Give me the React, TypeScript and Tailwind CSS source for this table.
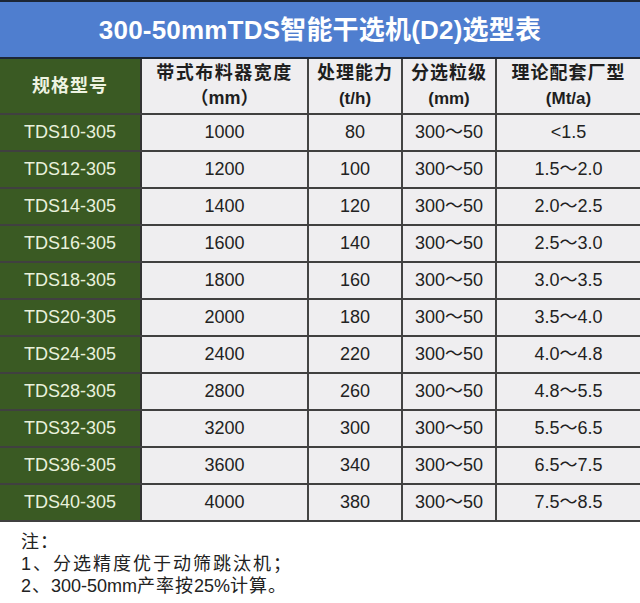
import React from "react";

const rows: [string, string, string, string, string][] = [
  ["TDS10-305", "1000", "80", "300～50", "<1.5"],
  ["TDS12-305", "1200", "100", "300～50", "1.5～2.0"],
  ["TDS14-305", "1400", "120", "300～50", "2.0～2.5"],
  ["TDS16-305", "1600", "140", "300～50", "2.5～3.0"],
  ["TDS18-305", "1800", "160", "300～50", "3.0～3.5"],
  ["TDS20-305", "2000", "180", "300～50", "3.5～4.0"],
  ["TDS24-305", "2400", "220", "300～50", "4.0～4.8"],
  ["TDS28-305", "2800", "260", "300～50", "4.8～5.5"],
  ["TDS32-305", "3200", "300", "300～50", "5.5～6.5"],
  ["TDS36-305", "3600", "340", "300～50", "6.5～7.5"],
  ["TDS40-305", "4000", "380", "300～50", "7.5～8.5"],
];

const font = "[font-family:'Liberation_Sans','Noto_Sans_CJK_SC',sans-serif]";

export default function App() {
  return (
    <div className={`w-[640px] h-[603px] bg-white ${font}`}>
      <div className="h-[59px] border-t-2 border-b-2 border-[#1c2636] bg-[#4f7ecf] flex items-center justify-center">
        <span className="text-[26px] font-bold text-white leading-none tracking-[0.2px]">300-50mmTDS智能干选机(D2)选型表</span>
      </div>
      <div className="grid grid-cols-[142px_167px_94px_94px_143px] h-[56px] border-b-2 border-[#404040]">
        <div className="bg-[#3a5a23] border-r-2 border-[#333] flex items-center justify-center text-[#eef3e2] font-bold text-[18px] tracking-[1px]">
          规格型号
        </div>
        <div className="bg-[#efeef0] border-r-2 border-[#444] flex flex-col items-center justify-center text-[#1e1e1e] font-bold text-[18px] leading-[25px]">
          <span className="tracking-[1.5px]">带式布料器宽度</span>
          <span>（mm）</span>
        </div>
        <div className="bg-[#efeef0] border-r-2 border-[#444] flex flex-col items-center justify-center text-[#1e1e1e] font-bold text-[18px] leading-[25px]">
          <span className="tracking-[1px]">处理能力</span>
          <span className="text-[17px]">(t/h)</span>
        </div>
        <div className="bg-[#efeef0] border-r-2 border-[#444] flex flex-col items-center justify-center text-[#1e1e1e] font-bold text-[18px] leading-[25px]">
          <span className="tracking-[1px]">分选粒级</span>
          <span className="text-[17px]">(mm)</span>
        </div>
        <div className="bg-[#efeef0] flex flex-col items-center justify-center text-[#1e1e1e] font-bold text-[18px] leading-[25px]">
          <span className="tracking-[1px]">理论配套厂型</span>
          <span className="text-[17px]">(Mt/a)</span>
        </div>
      </div>
      {rows.map((r, i) => (
        <div
          key={i}
          className="grid grid-cols-[142px_167px_94px_94px_143px] h-[37px] border-b-2 border-[#404040] text-[18px]"
        >
          <div className="bg-[#3a5a23] border-r-2 border-[#333] flex items-center justify-center text-[#e9f1dc]">
            {r[0]}
          </div>
          <div className="bg-[#efeef0] border-r-2 border-[#444] flex items-center justify-center text-[#222]">{r[1]}</div>
          <div className="bg-[#efeef0] border-r-2 border-[#444] flex items-center justify-center text-[#222]">{r[2]}</div>
          <div className="bg-[#efeef0] border-r-2 border-[#444] flex items-center justify-center text-[#222]">{r[3]}</div>
          <div className="bg-[#efeef0] flex items-center justify-center text-[#222]">{r[4]}</div>
        </div>
      ))}
      <div className="pl-[21px] pt-[9px] text-[18px] leading-[22px] text-[#222]">
        <div className="tracking-[1px]">注：</div>
        <div className="tracking-[2px]">1、分选精度优于动筛跳汰机；</div>
        <div>
          <span className="tracking-[1px]">2、</span>
          <span>300-50mm</span>
          <span className="tracking-[1px]">产率按</span>
          <span>25%</span>
          <span className="tracking-[1px]">计算。</span>
        </div>
      </div>
    </div>
  );
}
